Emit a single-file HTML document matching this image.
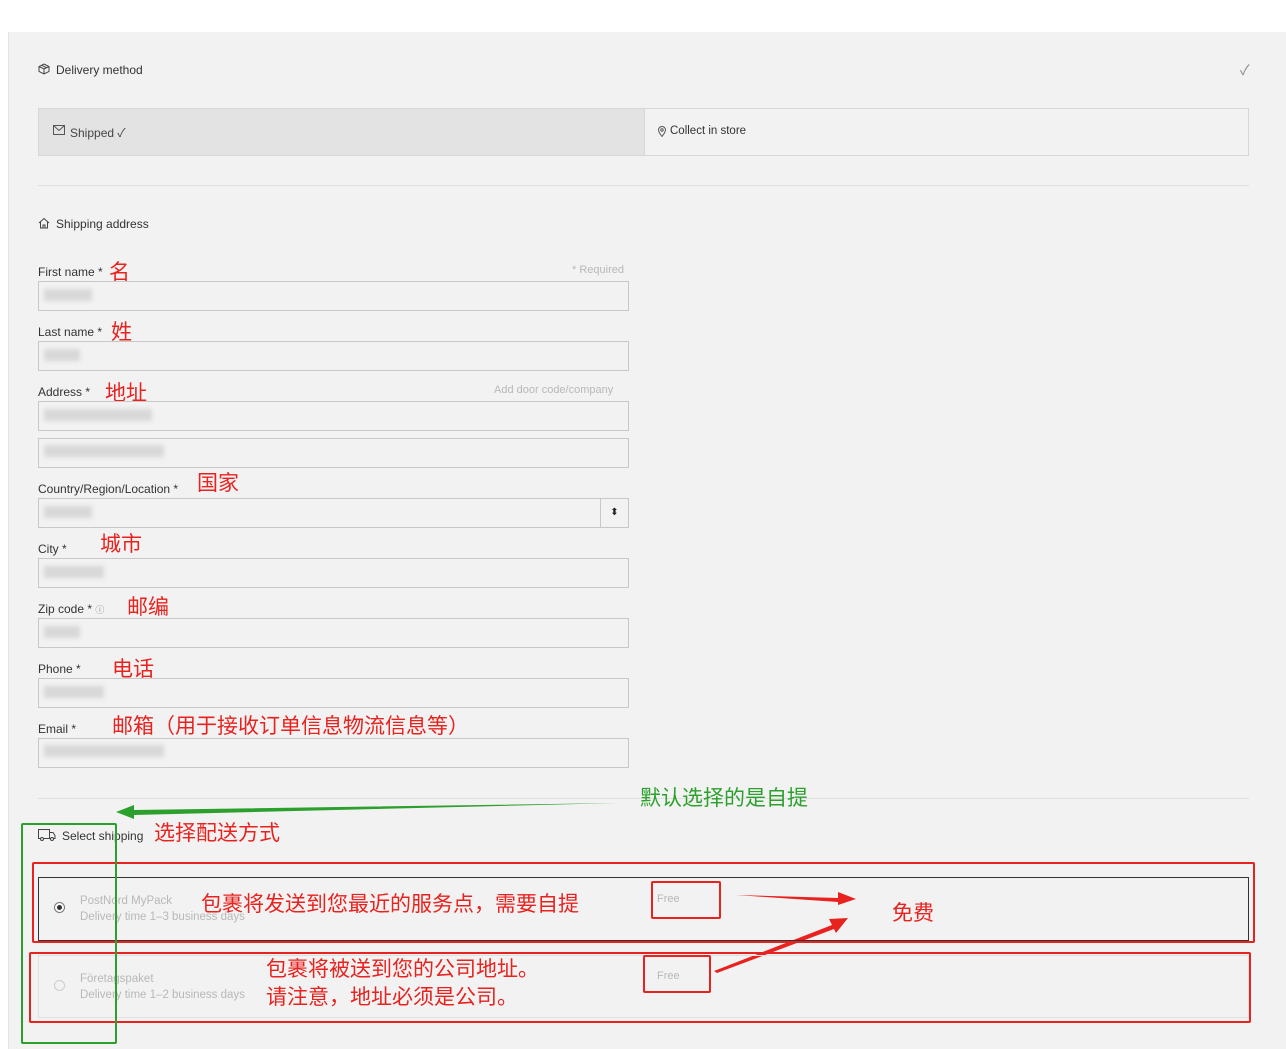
<!DOCTYPE html>
<html><head><meta charset="utf-8"><style>
*{margin:0;padding:0;box-sizing:border-box}
body{width:1286px;height:1049px;background:#fff;position:relative;overflow:hidden;font-family:"Liberation Sans","Noto Sans CJK SC",sans-serif;color:#333}
.a{position:absolute}
.panel{left:8px;top:32px;width:1278px;height:1017px;background:#f2f2f2;border-left:1px solid #e2e2e2}
.lbl{font-size:12px;color:#333;white-space:nowrap}
.inp{left:38px;width:591px;height:30px;border:1px solid #c8c8c8;background:#f2f2f2}
.blur{background:#d8d8d8;filter:blur(2px);height:12px}
.cn{color:#e8221e;font-size:21px;white-space:nowrap;font-family:"Noto Sans CJK SC",sans-serif;line-height:1}
.rb{border:2px solid #e8221e;border-radius:2px}
.hr{left:38px;width:1211px;height:1px;background:#e0e0e0}
.grey{color:#b8b8b8;font-size:11px;white-space:nowrap}
</style></head><body>
<div class="a panel"></div>

<svg class="a" style="left:38px;top:63px" width="12" height="12" viewBox="0 0 12 12" fill="none" stroke="#444" stroke-width="1"><path d="M6 1L11 3.5V8.5L6 11L1 8.5V3.5Z M1 3.5L6 6L11 3.5 M6 6V11 M3.5 2.2L8.5 4.7"/></svg>
<div class="a lbl" style="left:56px;top:63px">Delivery method</div>
<div class="a" style="left:1240px;top:60px;font-size:14px;color:#888">✓</div>

<div class="a" style="left:38px;top:108px;width:1211px;height:48px;border:1px solid #d6d6d6;background:#f2f2f2"></div>
<div class="a" style="left:38px;top:108px;width:607px;height:48px;background:#e3e3e3;border:1px solid #d6d6d6"></div>
<svg class="a" style="left:53px;top:125px" width="12" height="10" viewBox="0 0 12 10" fill="none" stroke="#555"><rect x=".5" y=".5" width="11" height="9"/><path d="M.5 .5L6 5.5L11.5 .5"/></svg>
<div class="a lbl" style="left:70px;top:124px;color:#444">Shipped ✓</div>
<svg class="a" style="left:658px;top:126px" width="8" height="11" viewBox="0 0 8 11" fill="none" stroke="#555"><path d="M4 10.5C4 10.5 7.5 6 7.5 4A3.5 3.5 0 0 0 .5 4C.5 6 4 10.5 4 10.5Z"/><circle cx="4" cy="4" r="1.2"/></svg>
<div class="a lbl" style="left:670px;top:125px;font-size:11.5px">Collect in store</div>

<div class="a hr" style="top:185px"></div>

<svg class="a" style="left:38px;top:217px" width="12" height="12" viewBox="0 0 12 12" fill="none" stroke="#444"><path d="M1 6L6 1.5L11 6 M2.5 5V11H9.5V5 M5 11V8H7V11"/></svg>
<div class="a lbl" style="left:56px;top:217px">Shipping address</div>

<div class="a lbl" style="left:38px;top:265px">First name *</div><div class="a cn" style="left:109px;top:261px">名</div>
<div class="a grey" style="left:572px;top:264px">* Required</div>
<div class="a inp" style="top:281px"></div><div class="a blur" style="left:44px;top:289px;width:48px"></div>

<div class="a lbl" style="left:38px;top:325px">Last name *</div><div class="a cn" style="left:111px;top:321px">姓</div>
<div class="a inp" style="top:341px"></div><div class="a blur" style="left:44px;top:349px;width:36px"></div>

<div class="a lbl" style="left:38px;top:385px">Address *</div><div class="a cn" style="left:105px;top:382px">地址</div>
<div class="a grey" style="left:494px;top:384px">Add door code/company</div>
<div class="a inp" style="top:401px"></div><div class="a blur" style="left:44px;top:409px;width:108px"></div>
<div class="a inp" style="top:438px"></div><div class="a blur" style="left:44px;top:445px;width:120px"></div>

<div class="a lbl" style="left:38px;top:482px">Country/Region/Location *</div><div class="a cn" style="left:197px;top:472px">国家</div>
<div class="a inp" style="top:498px"></div><div class="a blur" style="left:44px;top:506px;width:48px"></div>
<div class="a" style="left:600px;top:498px;width:29px;height:30px;border:1px solid #c8c8c8;font-size:10px;text-align:center;line-height:28px;color:#222">⬍</div>

<div class="a lbl" style="left:38px;top:542px">City *</div><div class="a cn" style="left:100px;top:533px">城市</div>
<div class="a inp" style="top:558px"></div><div class="a blur" style="left:44px;top:566px;width:60px"></div>

<div class="a lbl" style="left:38px;top:602px">Zip code * <span style="font-size:9px;color:#888">ⓘ</span></div><div class="a cn" style="left:127px;top:596px">邮编</div>
<div class="a inp" style="top:618px"></div><div class="a blur" style="left:44px;top:626px;width:36px"></div>

<div class="a lbl" style="left:38px;top:662px">Phone *</div><div class="a cn" style="left:112px;top:658px">电话</div>
<div class="a inp" style="top:678px"></div><div class="a blur" style="left:44px;top:686px;width:60px"></div>

<div class="a lbl" style="left:38px;top:722px">Email *</div><div class="a cn" style="left:112px;top:715px">邮箱（用于接收订单信息物流信息等）</div>
<div class="a inp" style="top:738px"></div><div class="a blur" style="left:44px;top:745px;width:120px"></div>

<div class="a hr" style="top:798px"></div>

<svg class="a" style="left:0;top:0" width="1286" height="1049">
<path d="M618 803L134 810L134 805L116 812L134 819L134 815Z" fill="#2ca02c"/>
<path d="M736 895L838 898L838 892L856 899L838 905L838 902Z" fill="#e8221e"/>
<path d="M714 971L832 925L829 919L848 918L836 933L834 929L717 973Z" fill="#e8221e"/>
</svg>
<div class="a cn" style="left:640px;top:787px;color:#2ca02c">默认选择的是自提</div>

<svg class="a" style="left:38px;top:829px" width="18" height="12" viewBox="0 0 18 12" fill="none" stroke="#444"><path d="M.5 .5H11.5V9.5H.5Z M11.5 3.5H15L17 6.5V9.5H11.5"/><circle cx="4" cy="10" r="1.5" fill="#f2f2f2"/><circle cx="14" cy="10" r="1.5" fill="#f2f2f2"/></svg>
<div class="a lbl" style="left:62px;top:829px">Select shipping</div>
<div class="a cn" style="left:154px;top:822px">选择配送方式</div>

<div class="a" style="left:38px;top:877px;width:1211px;height:64px;border:1px solid #333"></div>
<div class="a" style="left:54px;top:902px;width:11px;height:11px;border:1px solid #777;border-radius:50%;background:#fff"></div>
<div class="a" style="left:57px;top:905px;width:5px;height:5px;border-radius:50%;background:#333"></div>
<div class="a grey" style="left:80px;top:893px;font-size:11.5px;line-height:16px">PostNord MyPack<br>Delivery time 1–3 business days</div>
<div class="a cn" style="left:201px;top:893px">包裹将发送到您最近的服务点，需要自提</div>
<div class="a grey" style="left:657px;top:893px">Free</div>

<div class="a" style="left:38px;top:955px;width:1211px;height:63px;border:1px solid #e0e0e0"></div>
<div class="a" style="left:54px;top:980px;width:11px;height:11px;border:1px solid #ccc;border-radius:50%"></div>
<div class="a grey" style="left:80px;top:971px;font-size:11.5px;line-height:16px">Företagspaket<br>Delivery time 1–2 business days</div>
<div class="a cn" style="left:266px;top:958px">包裹将被送到您的公司地址。</div>
<div class="a cn" style="left:266px;top:986px">请注意，地址必须是公司。</div>
<div class="a grey" style="left:657px;top:970px">Free</div>

<div class="a cn" style="left:892px;top:902px">免费</div>

<div class="a rb" style="left:32px;top:862px;width:1223px;height:81px"></div>
<div class="a rb" style="left:29px;top:952px;width:1222px;height:71px"></div>
<div class="a rb" style="left:651px;top:881px;width:70px;height:38px"></div>
<div class="a rb" style="left:643px;top:955px;width:68px;height:38px"></div>
<div class="a" style="left:21px;top:823px;width:96px;height:221px;border:2px solid #2ca02c;border-radius:2px"></div>
</body></html>
